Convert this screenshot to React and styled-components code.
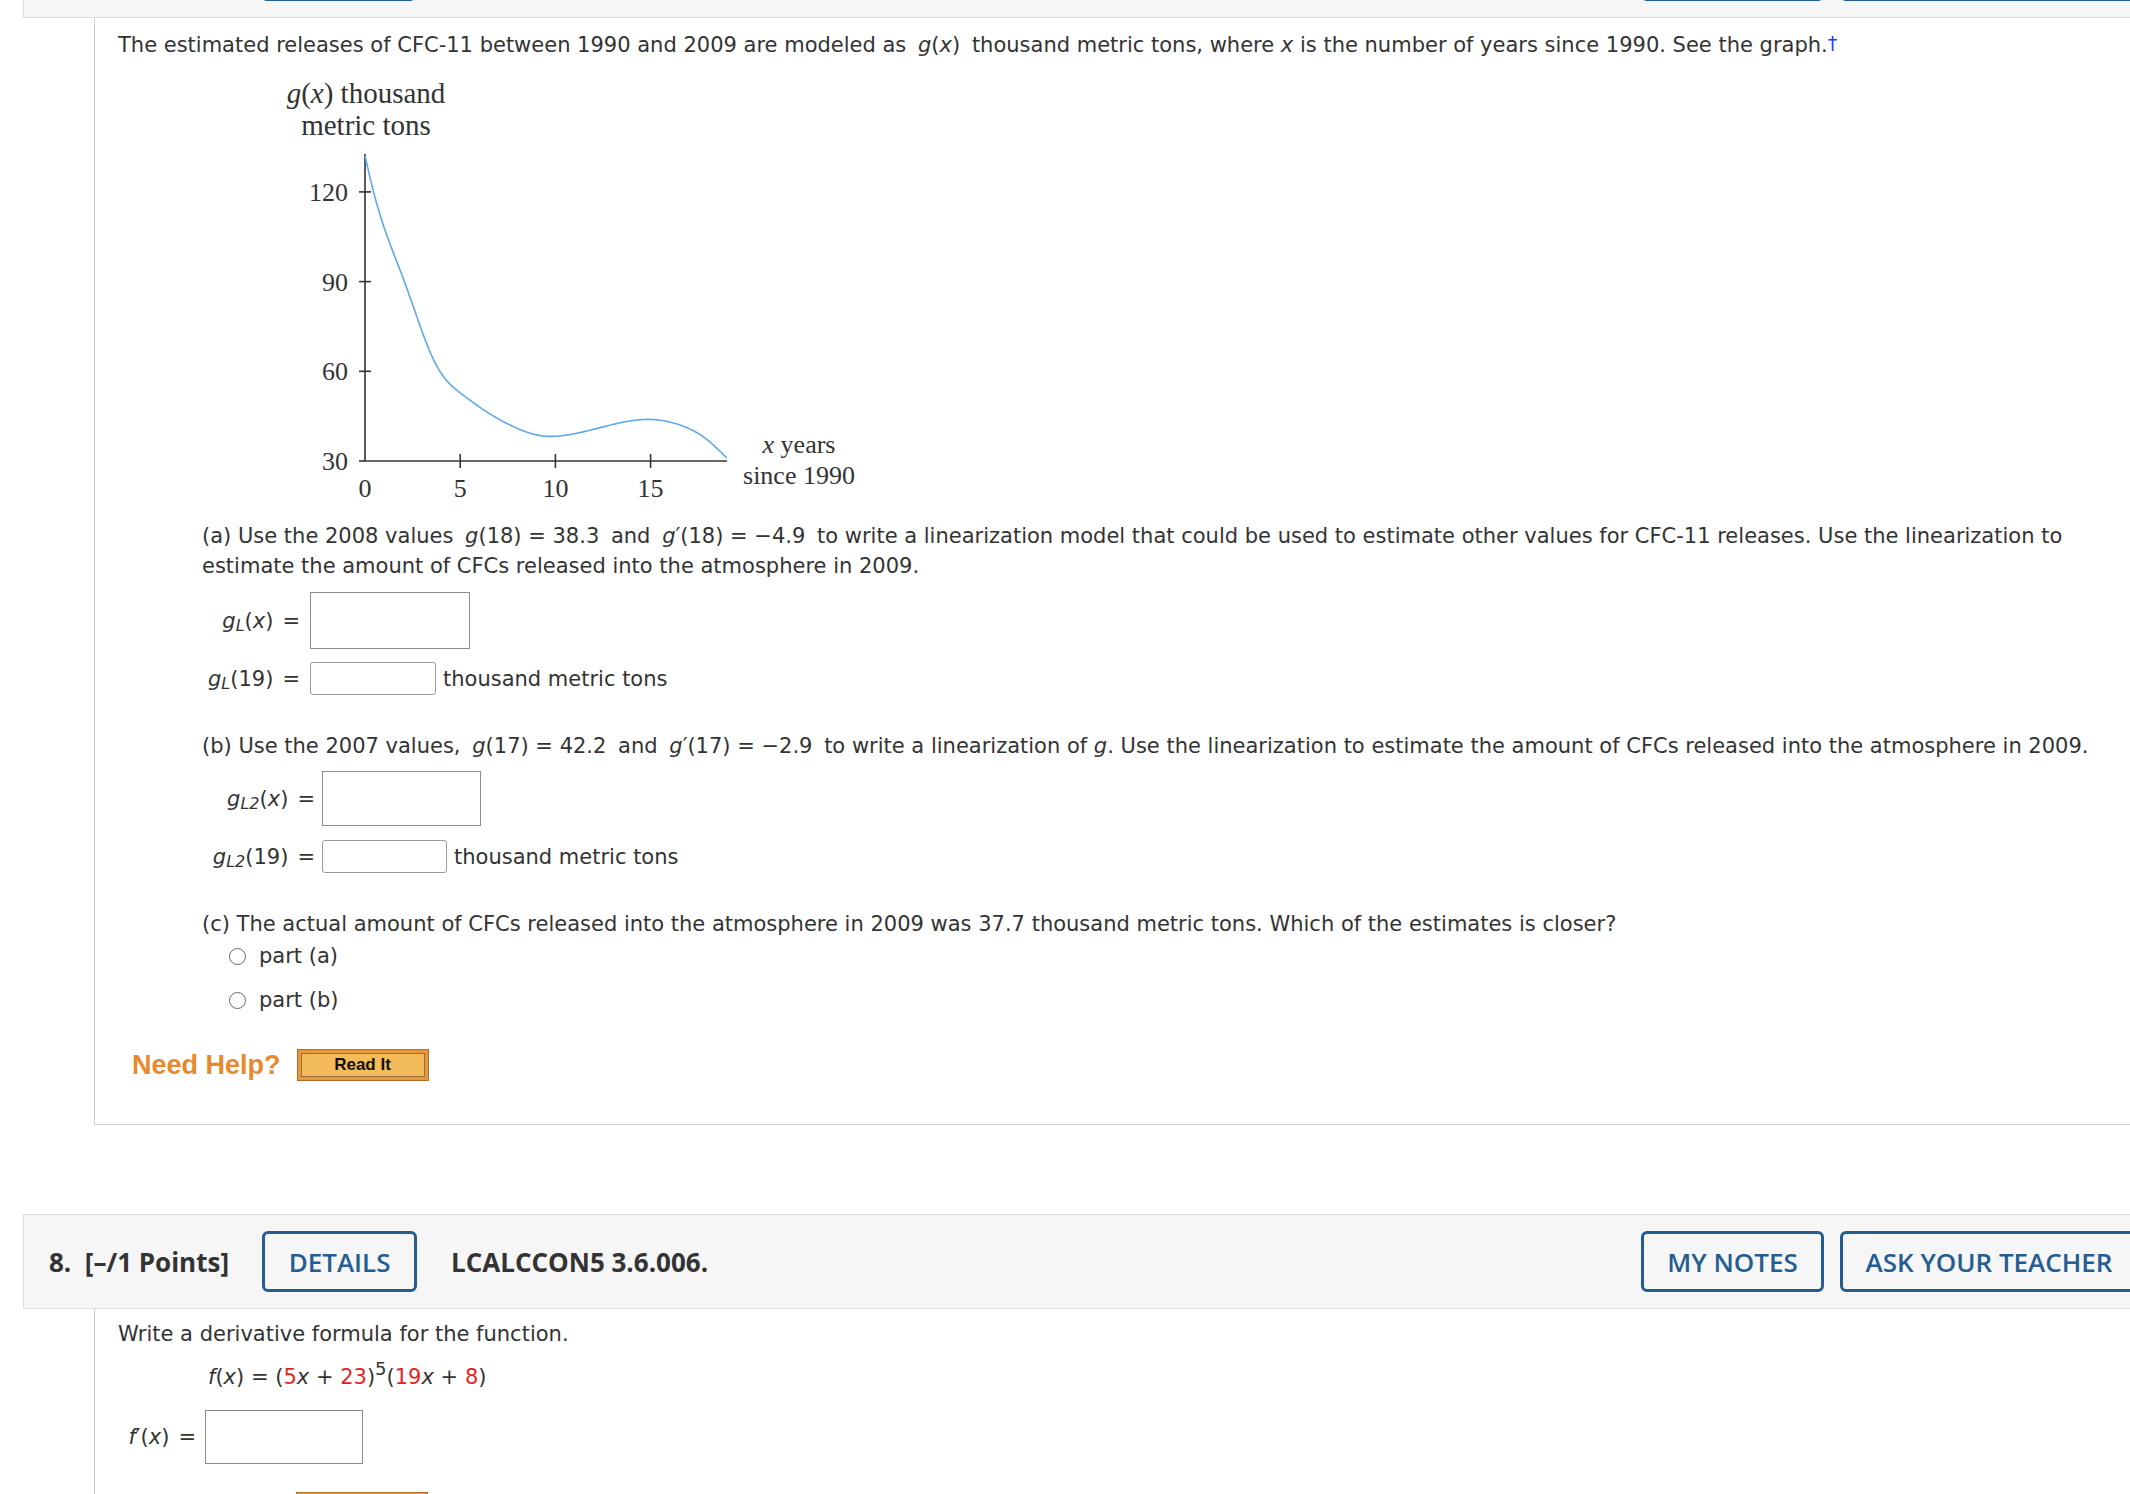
import React from 'react';
import styled, { createGlobalStyle } from 'styled-components';

const GlobalStyle = createGlobalStyle`
  html, body {
    margin: 0;
    padding: 0;
    background: #fff;
    overflow: hidden;
  }
  body {
    font-family: 'DejaVu Sans', Verdana, sans-serif;
    color: #333;
  }
`;

const Page = styled.div`
  width: 2170px;
`;

const Strip = styled.div`
  height: 18px;
  overflow: hidden;
  display: flex;
  flex-direction: column;
  justify-content: flex-end;
`;

const Header = styled.div`
  flex-shrink: 0;
  margin-left: 23px;
  height: 93px;
  background: #f6f6f6;
  border: 1px solid #ddd;
  border-right: none;
  display: flex;
  align-items: center;
  padding: 0 32px 0 25px;
  font-family: 'Open Sans', 'Noto Sans', sans-serif;
  font-size: 26px;
  font-weight: 700;
  color: #333;
`;

const Points = styled.span`
  min-width: 179px;
  margin-right: 33px;
  white-space: pre;
`;

const HeaderButton = styled.button`
  width: ${(p) => p.$w}px;
  height: 61px;
  box-sizing: border-box;
  padding: 0;
  background: transparent;
  border: 3px solid #245d92;
  border-radius: 6px;
  color: #245d92;
  font-family: 'Open Sans', 'Noto Sans', sans-serif;
  font-size: 26px;
  font-weight: 600;
  white-space: nowrap;
  margin-left: ${(p) => p.$gap || 0}px;
`;

const Code = styled.span`
  margin-left: 34px;
  flex: 1;
`;

const Panel = styled.div`
  margin-left: 94px;
  border-left: 1px solid #ccc;
  border-bottom: ${(p) => (p.$closed ? '1px solid #ccc' : 'none')};
  padding: 10px 0 ${(p) => p.$bottom || 0}px 23px;
  font-size: 21px;
  line-height: 30px;
`;

const Para = styled.div`
  margin-left: ${(p) => p.$indent || 0}px;
  margin-top: ${(p) => p.$top || 0}px;
  white-space: ${(p) => (p.$nowrap ? 'nowrap' : 'normal')};
`;

const M = styled.span`
  margin: 0 5px;
`;

const I = styled.i`
  font-style: italic;
`;

const Dagger = styled.span`
  color: #1a3cff;
  font-size: 19px;
  vertical-align: 2px;
`;

const Red = styled.span`
  color: #e8231d;
`;

const Sup = styled.sup`
  font-size: 18px;
  line-height: 0;
  vertical-align: 9px;
`;

const Sub = styled.sub`
  font-size: 16px;
  line-height: 0;
  vertical-align: -3px;
  font-style: italic;
`;

const GraphSvg = styled.svg`
  display: block;
  margin: 12px 0 0 162px;
`;

const AnswerGrid = styled.div`
  display: grid;
  grid-template-columns: ${(p) => p.$label}px auto;
  justify-content: start;
  column-gap: ${(p) => p.$gap}px;
  row-gap: ${(p) => p.$rowGap}px;
  align-items: center;
  margin-top: ${(p) => p.$top}px;
  margin-left: ${(p) => p.$indent || 0}px;
`;

const Label = styled.div`
  justify-self: end;
  white-space: nowrap;
`;

const Eq = styled.span`
  margin-left: 9px;
`;

const Field = styled.div`
  display: flex;
  align-items: center;
  gap: 7px;
`;

const Box = styled.div`
  box-sizing: border-box;
  width: ${(p) => p.$w}px;
  height: ${(p) => p.$h}px;
  border: 1px solid ${(p) => (p.$small ? '#9a9a9a' : '#8c8c8c')};
  border-radius: ${(p) => (p.$small ? 3 : 0)}px;
  background: #fff;
`;

const Unit = styled.span`
  white-space: nowrap;
`;

const RadioRow = styled.label`
  display: flex;
  align-items: center;
  margin: ${(p) => p.$top}px 0 0 27px;
  height: 30px;
`;

const Radio = styled.span`
  width: 17px;
  height: 17px;
  box-sizing: border-box;
  border: 1px solid #666;
  border-radius: 50%;
  margin-right: 13px;
`;

const HelpRow = styled.div`
  display: flex;
  align-items: center;
  margin: ${(p) => p.$top}px 0 0 ${(p) => p.$left || 14}px;
`;

const HelpText = styled.span`
  font-family: 'Liberation Sans', Arial, sans-serif;
  font-weight: 700;
  font-size: 27px;
  color: #e8892e;
  margin-right: 16px;
`;

const ReadIt = styled.button`
  width: 132px;
  height: 32px;
  box-sizing: border-box;
  border: 1px solid #b36c26;
  background: #f3bb5a;
  box-shadow: inset 0 0 0 3px #e8973c, inset 0 0 0 4px #94703c;
  font-family: 'Liberation Sans', Arial, sans-serif;
  font-weight: 700;
  font-size: 17px;
  color: #111;
  padding: 0;
`;

const Gap = styled.div`
  height: 89px;
`;

// read off the printed graph (years since 1990, thousand metric tons)
const data = [
  [0, 132], [0.45, 120], [2.07, 90], [3.75, 62], [5.1, 52.3], [6.6, 45.6], [7.9, 41.2],
  [9.3, 38.4], [10.5, 38.6], [12.5, 41.4], [15, 43.9], [16.6, 41.9], [17.9, 37.5], [19, 31],
];
const px = (x) => 85 + x * 19.04;
const py = (y) => 389 - (y - 30) * 2.99;

const spline = (pts) => {
  const n = pts.length;
  const xs = pts.map((p) => p[0]);
  const ys = pts.map((p) => p[1]);
  const h = xs.slice(1).map((x, i) => x - xs[i]);
  const a = new Array(n).fill(0);
  const b = new Array(n).fill(1);
  const c = new Array(n).fill(0);
  const r = new Array(n).fill(0);
  for (let i = 1; i < n - 1; i++) {
    a[i] = h[i - 1];
    b[i] = 2 * (h[i - 1] + h[i]);
    c[i] = h[i];
    r[i] = 6 * ((ys[i + 1] - ys[i]) / h[i] - (ys[i] - ys[i - 1]) / h[i - 1]);
  }
  for (let i = 1; i < n; i++) {
    const m = a[i] / b[i - 1];
    b[i] -= m * c[i - 1];
    r[i] -= m * r[i - 1];
  }
  const M = new Array(n).fill(0);
  for (let i = n - 2; i > 0; i--) M[i] = (r[i] - c[i] * M[i + 1]) / b[i];
  return (x) => {
    let i = 0;
    while (i < n - 2 && x > xs[i + 1]) i++;
    const hi = h[i];
    const A = xs[i + 1] - x;
    const B = x - xs[i];
    return (
      (M[i] * A ** 3) / (6 * hi) +
      (M[i + 1] * B ** 3) / (6 * hi) +
      (ys[i] / hi - (M[i] * hi) / 6) * A +
      (ys[i + 1] / hi - (M[i + 1] * hi) / 6) * B
    );
  };
};

const g = spline(data);
const curvePath = Array.from({ length: 381 }, (_, k) => {
  const x = k * 0.05;
  return `${k ? 'L' : 'M'}${px(x).toFixed(1)},${py(g(x)).toFixed(1)}`;
}).join(' ');

const Graph = () => (
  <GraphSvg width="600" height="440" viewBox="0 0 600 440">
    <g fontFamily="'Liberation Serif', 'Times New Roman', serif" fill="#333">
      <g fontSize="29">
        <text x="86" y="31" textAnchor="middle">
          <tspan fontStyle="italic">g</tspan>(<tspan fontStyle="italic">x</tspan>) thousand
        </text>
        <text x="86" y="63" textAnchor="middle">metric tons</text>
      </g>
      <g fontSize="26">
        {[120, 90, 60, 30].map((v) => (
          <text key={v} x="68" y={py(v) + 9} textAnchor="end">{v}</text>
        ))}
        {[0, 5, 10, 15].map((v) => (
          <text key={v} x={px(v)} y="425" textAnchor="middle">{v}</text>
        ))}
        <text x="519" y="381" textAnchor="middle">
          <tspan fontStyle="italic">x</tspan> years
        </text>
        <text x="519" y="412" textAnchor="middle">since 1990</text>
      </g>
    </g>
    <g stroke="#333" strokeWidth="1.6" fill="none">
      <line x1="85" y1="82" x2="85" y2="389" />
      <line x1="85" y1="389" x2="447" y2="389" />
      {[120, 90, 60].map((v) => (
        <line key={v} x1="79" y1={py(v)} x2="91" y2={py(v)} />
      ))}
      <line x1="79" y1="389" x2="85" y2="389" />
      {[5, 10, 15].map((v) => (
        <line key={v} x1={px(v)} y1="382" x2={px(v)} y2="396" />
      ))}
    </g>
    <path d={curvePath} stroke="#5ea8ec" strokeWidth="1.6" fill="none" />
  </GraphSvg>
);

const QuestionHeader = ({ num, code, stub }) => (
  <Header>
    <Points>{stub ? '' : `${num}.  [–/1 Points]`}</Points>
    <HeaderButton $w={155}>{stub ? '' : 'DETAILS'}</HeaderButton>
    <Code>{stub ? '' : code}</Code>
    <HeaderButton $w={183}>{stub ? '' : 'MY NOTES'}</HeaderButton>
    <HeaderButton $w={298} $gap={16}>
      {stub ? '' : 'ASK YOUR TEACHER'}
    </HeaderButton>
  </Header>
);

const G = ({ sub }) => (
  <>
    <I>g</I>
    <Sub>{sub}</Sub>
  </>
);

const App = () => (
  <Page>
    <GlobalStyle />
    <Strip>
      <QuestionHeader stub />
    </Strip>
    <Panel $closed $bottom={43}>
      <Para>
        The estimated releases of CFC-11 between 1990 and 2009 are modeled as{' '}
        <M>
          <I>g</I>(<I>x</I>)
        </M>{' '}
        thousand metric tons, where <I>x</I> is the number of years since 1990. See the graph.
        <Dagger>†</Dagger>
      </Para>
      <Graph />
      <Para $indent={84} $top={9} $nowrap>
        (a) Use the 2008 values{' '}
        <M>
          <I>g</I>(18) = 38.3
        </M>{' '}
        and{' '}
        <M>
          <I>g</I>′(18) = −4.9
        </M>{' '}
        to write a linearization model that could be used to estimate other values for CFC-11 releases. Use the
        linearization to
        <br />
        estimate the amount of CFCs released into the atmosphere in 2009.
      </Para>
      <AnswerGrid $indent={84} $label={98} $gap={10} $rowGap={13} $top={11}>
        <Label>
          <G sub="L" />(<I>x</I>)<Eq>=</Eq>
        </Label>
        <Field>
          <Box $w={160} $h={57} />
        </Field>
        <Label>
          <G sub="L" />(19)<Eq>=</Eq>
        </Label>
        <Field>
          <Box $small $w={126} $h={33} />
          <Unit>thousand metric tons</Unit>
        </Field>
      </AnswerGrid>
      <Para $indent={84} $top={36} $nowrap>
        (b) Use the 2007 values,{' '}
        <M>
          <I>g</I>(17) = 42.2
        </M>{' '}
        and{' '}
        <M>
          <I>g</I>′(17) = −2.9
        </M>{' '}
        to write a linearization of <I>g</I>. Use the linearization to estimate the amount of CFCs released into the
        atmosphere in 2009.
      </Para>
      <AnswerGrid $indent={84} $label={113} $gap={7} $rowGap={14} $top={10}>
        <Label>
          <G sub="L2" />(<I>x</I>)<Eq>=</Eq>
        </Label>
        <Field>
          <Box $w={159} $h={55} />
        </Field>
        <Label>
          <G sub="L2" />(19)<Eq>=</Eq>
        </Label>
        <Field>
          <Box $small $w={125} $h={33} />
          <Unit>thousand metric tons</Unit>
        </Field>
      </AnswerGrid>
      <Para $indent={84} $top={36}>
        (c) The actual amount of CFCs released into the atmosphere in 2009 was 37.7 thousand metric tons. Which of the
        estimates is closer?
      </Para>
      <Para $indent={84}>
        <RadioRow $top={2}>
          <Radio />
          part (a)
        </RadioRow>
        <RadioRow $top={14}>
          <Radio />
          part (b)
        </RadioRow>
      </Para>
      <HelpRow $top={34}>
        <HelpText>Need Help?</HelpText>
        <ReadIt>Read It</ReadIt>
      </HelpRow>
    </Panel>
    <Gap />
    <QuestionHeader num="8" code="LCALCCON5 3.6.006." />
    <Panel $bottom={40}>
      <Para>Write a derivative formula for the function.</Para>
      <Para $indent={90} $top={13}>
        <I>f</I>(<I>x</I>) = (<Red>5</Red>
        <I>x</I> + <Red>23</Red>)<Sup>5</Sup>(<Red>19</Red>
        <I>x</I> + <Red>8</Red>)
      </Para>
      <AnswerGrid $indent={6} $label={72} $gap={9} $rowGap={0} $top={18}>
        <Label>
          <I>f</I>′(<I>x</I>)<Eq>=</Eq>
        </Label>
        <Field>
          <Box $w={158} $h={54} />
        </Field>
      </AnswerGrid>
      {/* only the top edge of the next help button reaches into view */}
      <HelpRow $top={28} $left={178}>
        <ReadIt aria-label="Read It" />
      </HelpRow>
    </Panel>
  </Page>
);

export default App;
